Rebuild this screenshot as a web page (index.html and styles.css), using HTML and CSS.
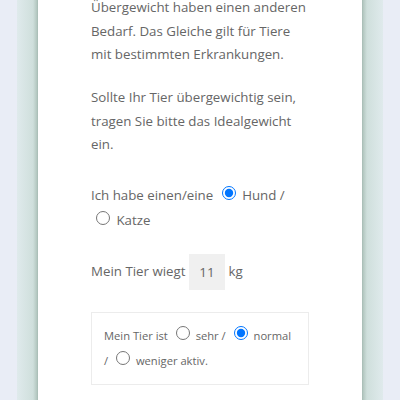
FILE: index.html
```html
<!DOCTYPE html>
<html lang="de">
<head>
<meta charset="utf-8">
<link rel="stylesheet" href="styles.css">
</head>
<body>
<div class="frame">
  <div class="card">
    <p class="text first">Übergewicht haben einen anderen Bedarf. Das Gleiche gilt für Tiere mit bestimmten Erkrankungen.</p>
    <p class="text">Sollte Ihr Tier übergewichtig sein, tragen Sie bitte das Idealgewicht ein.</p>
    <p class="text row-animal">Ich habe einen/eine <input class="radio" type="radio" name="tier" checked> Hund / <input class="radio" type="radio" name="tier"> Katze</p>
    <p class="text row-weight">Mein Tier wiegt <input class="weight" type="text" value="11"> kg</p>
    <div class="activity">Mein Tier ist <input class="radio" type="radio" name="akt"> sehr / <input class="radio" type="radio" name="akt" checked> normal / <input class="radio" type="radio" name="akt"> weniger aktiv.</div>
  </div>
</div>
</body>
</html>
```
FILE: styles.css
```css
html, body {
  margin: 0;
  height: 100%;
}
body {
  background: #e9edf6;
  font-family: "Open Sans", "Noto Sans", sans-serif;
  color: #666;
  overflow: hidden;
}
.frame {
  margin: 0 17px;
  padding: 0 21px;
  height: 100%;
  background:
    linear-gradient(90deg, #dfeaec 0, #cfdfdc 16px, #b2c6bf 20px, #a4b9b2 21px, transparent 21px),
    linear-gradient(270deg, #dfeaec 0, #cfdfdc 16px, #b2c6bf 20px, #a4b9b2 21px, transparent 21px);
}
.card {
  background: #fff;
  height: 100%;
  padding: 0 53px;
  overflow: hidden;
}
.text {
  font-size: 13.3px;
  line-height: 23.5px;
  margin: 0 0 19.5px;
}
.text.first {
  margin-top: -4px;
}
.radio {
  width: 14px;
  height: 14px;
  margin: 3px 3px 0 5px;
}
.row-animal {
  margin-top: 26.5px;
  margin-bottom: 22.4px;
}
.weight {
  width: 36px;
  height: 36px;
  box-sizing: border-box;
  border: none;
  background: #f0f0f0;
  font-family: inherit;
  font-size: 13.3px;
  color: #666;
  text-align: center;
  padding: 0;
  vertical-align: middle;
}
.row-weight {
  margin-bottom: 22px;
}
.activity {
  border: 1px solid #ececec;
  padding: 10px 12px 11px;
  font-size: 11.2px;
  line-height: 24px;
}
```
